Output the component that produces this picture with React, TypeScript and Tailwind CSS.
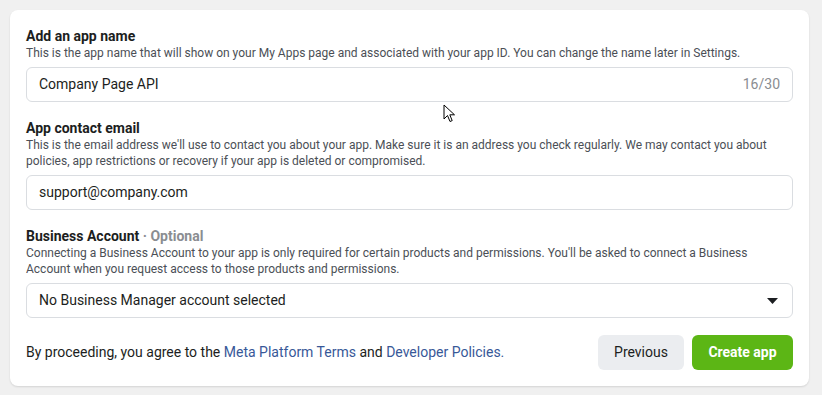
import { ReactNode } from 'react';

function Field({
  title,
  optional,
  description,
  children,
}: {
  title: string;
  optional?: boolean;
  description: ReactNode;
  children: ReactNode;
}) {
  return (
    <div className="flex flex-col">
      <h2 className="text-[14px] leading-[18px] font-bold text-[#1c1e21]">
        {title}
        {optional && <span className="text-[#8a8d91]"> · Optional</span>}
      </h2>
      <p className="text-[12px] leading-[16px] text-[#4b4f56]">{description}</p>
      <div className="mt-[6px]">{children}</div>
    </div>
  );
}

function Cursor() {
  return (
    <svg
      className="absolute left-[443px] top-[104px]"
      width="14"
      height="20"
      viewBox="0 0 14 20"
    >
      <path
        d="M1 1 L1 15 L4.5 11.5 L7 17.5 L9.2 16.6 L6.8 10.8 L11.5 10.8 Z"
        fill="#fff"
        stroke="#000"
        strokeWidth="1"
        strokeLinejoin="round"
      />
    </svg>
  );
}

export default function App() {
  return (
    <div className="relative h-[395px] w-[822px] bg-[#f0f0f0] pl-[10px] pr-[13px] pt-[10px] font-['Roboto',sans-serif]">
      <div className="flex flex-col rounded-lg bg-white px-4 pt-[17px] pb-4 shadow-[0_1px_2px_rgba(0,0,0,0.12)]">
        <Field
          title="Add an app name"
          description="This is the app name that will show on your My Apps page and associated with your app ID. You can change the name later in Settings."
        >
          <div className="flex h-[35px] items-center justify-between rounded-md border border-[#dadde1] px-3">
            <span className="text-[14px] text-[#1c1e21]">Company Page API</span>
            <span className="text-[14px] text-[#8a8d91]">16/30</span>
          </div>
        </Field>

        <div className="mt-[17px]">
          <Field
            title="App contact email"
            description="This is the email address we'll use to contact you about your app. Make sure it is an address you check regularly. We may contact you about policies, app restrictions or recovery if your app is deleted or compromised."
          >
            <div className="flex h-[35px] items-center rounded-md border border-[#dadde1] px-3">
              <span className="text-[14px] text-[#1c1e21]">support@company.com</span>
            </div>
          </Field>
        </div>

        <div className="mt-[17px]">
          <Field
            title="Business Account"
            optional
            description="Connecting a Business Account to your app is only required for certain products and permissions. You'll be asked to connect a Business Account when you request access to those products and permissions."
          >
            <div className="flex h-[35px] items-center justify-between rounded-md border border-[#dadde1] pl-3 pr-[14px]">
              <span className="text-[14px] text-[#1c1e21]">No Business Manager account selected</span>
              <svg width="11" height="6" viewBox="0 0 11 6">
                <path d="M0 0 H11 L5.5 6 Z" fill="#1c1e21" />
              </svg>
            </div>
          </Field>
        </div>

        <div className="mt-[17px] flex items-center justify-between">
          <p className="text-[14px] text-[#1c1e21]">
            By proceeding, you agree to the{' '}
            <a className="text-[#385898]">Meta Platform Terms</a> and{' '}
            <a className="text-[#385898]">Developer Policies.</a>
          </p>
          <div className="flex gap-2">
            <button className="h-[35px] w-[86px] rounded-md bg-[#ebedf0] text-[14px] text-[#1c1e21]">
              Previous
            </button>
            <button className="h-[35px] w-[101px] rounded-md bg-[#5cb615] text-[14px] font-bold text-white">
              Create app
            </button>
          </div>
        </div>
      </div>
      <Cursor />
    </div>
  );
}
